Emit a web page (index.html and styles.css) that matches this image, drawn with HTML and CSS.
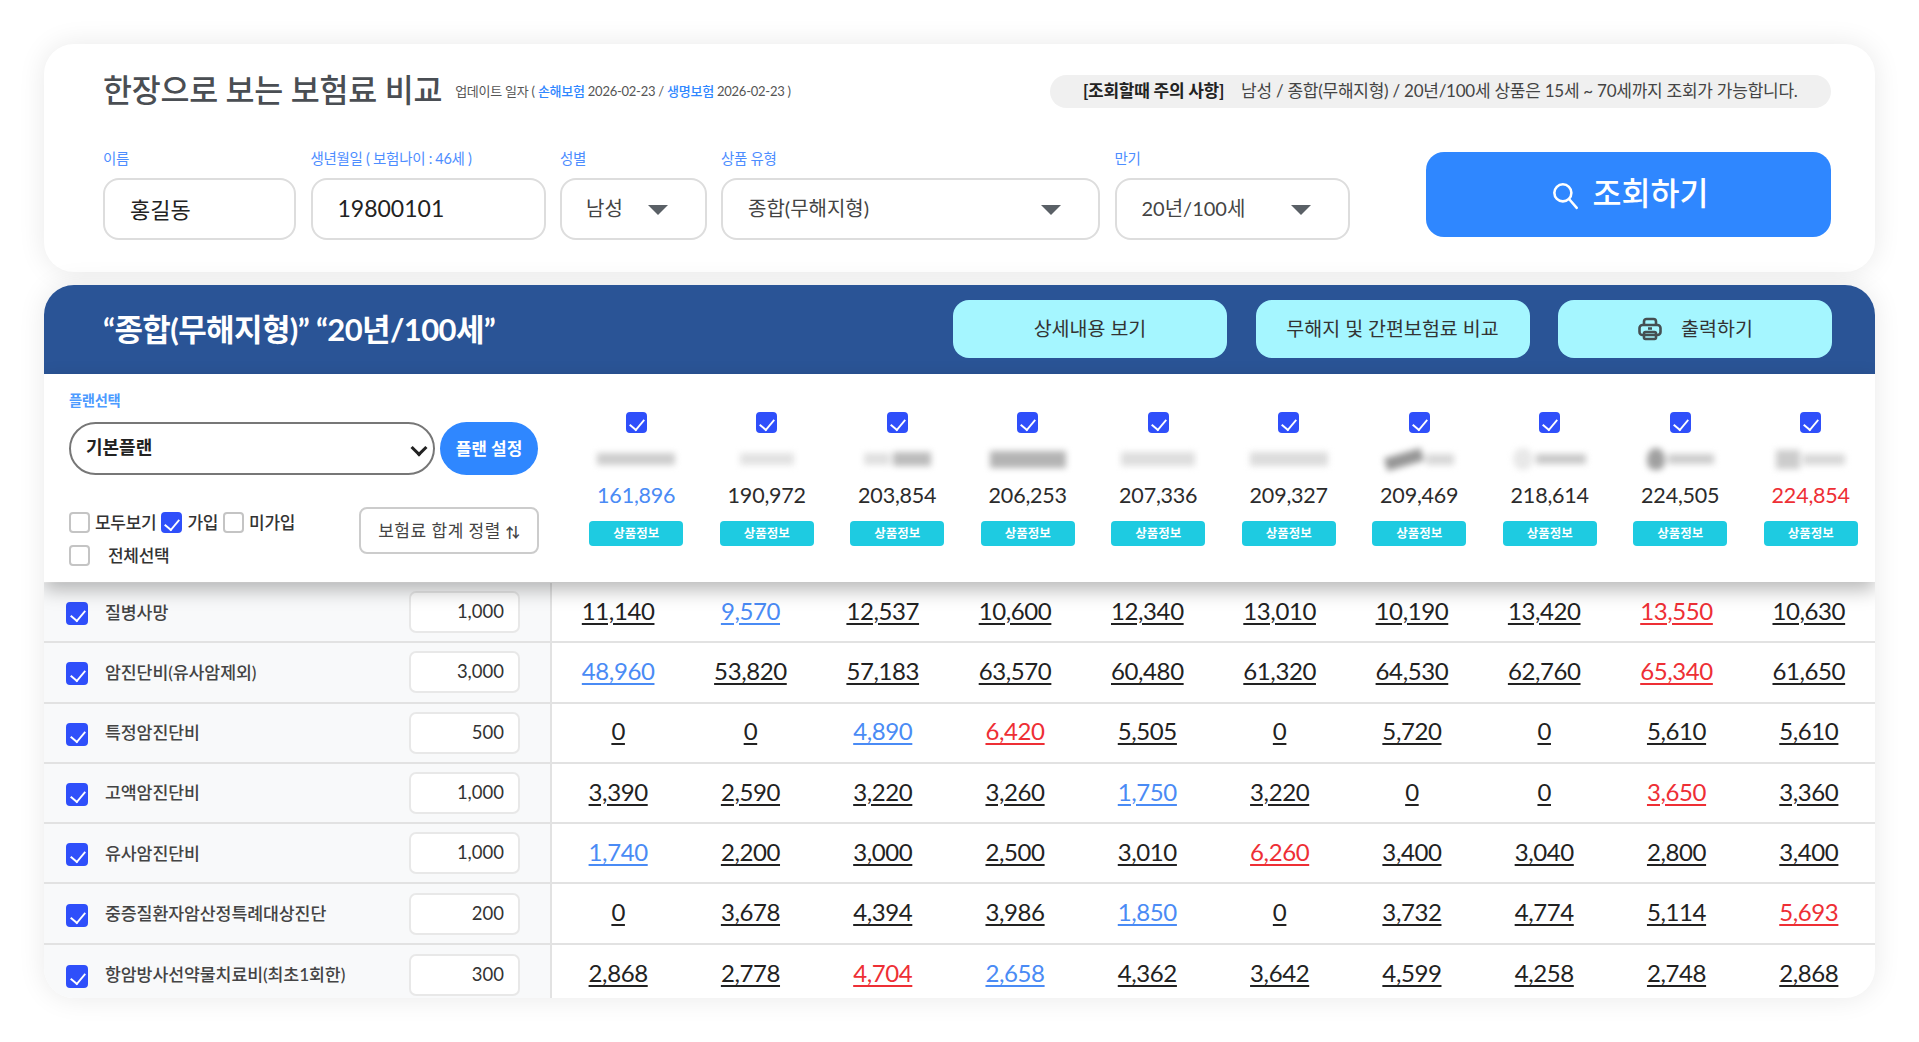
FILE: index.html
```html
<!DOCTYPE html>
<html lang="ko">
<head>
<meta charset="utf-8">
<title>한장으로 보는 보험료 비교</title>
<link rel="stylesheet" href="styles.css">
</head>
<body>

<section class="search-card">
  <div class="search-head">
    <div class="title-wrap">
      <h1>한장으로 보는 보험료 비교</h1>
      <p class="update">업데이트 일자 ( <b>손해보험</b> 2026-02-23 / <b>생명보험</b> 2026-02-23 )</p>
    </div>
    <p class="notice"><b>[조회할때 주의 사항]</b>남성 / 종합(무해지형) / 20년/100세 상품은 15세 ~ 70세까지 조회가 가능합니다.</p>
  </div>
  <form class="search-form">
    <div class="field f-name">
      <label>이름</label>
      <input type="text" value="홍길동">
    </div>
    <div class="field f-birth">
      <label>생년월일 ( 보험나이 : 46세 )</label>
      <input type="text" value="19800101">
    </div>
    <div class="field f-gender">
      <label>성별</label>
      <div class="drop"><select><option>남성</option></select></div>
    </div>
    <div class="field f-type">
      <label>상품 유형</label>
      <div class="drop"><select><option>종합(무해지형)</option></select></div>
    </div>
    <div class="field f-term">
      <label>만기</label>
      <div class="drop"><select><option>20년/100세</option></select></div>
    </div>
    <button class="btn-search" type="button">
      <svg width="32" height="32" viewBox="0 0 30 30" fill="none" stroke="#fff" stroke-width="2.4" stroke-linecap="round"><circle cx="13" cy="13" r="8"/><path d="M19 19l7 8"/></svg>
      조회하기
    </button>
  </form>
</section>

<section class="sheet">
  <div class="band">
    <h2>“종합(무해지형)” “20년/100세”</h2>
    <div class="band-btns">
      <button type="button">상세내용 보기</button>
      <button type="button">무해지 및 간편보험료 비교</button>
      <button type="button">
        <svg width="26" height="24" viewBox="0 0 26 24" fill="none" stroke="#454f52" stroke-width="2.6" stroke-linejoin="round"><path d="M7 8V4.5A2.5 2.5 0 0 1 9.500 2h7A2.500 2.500 0 0 1 19 4.500V8"/><rect x="2.500" y="8" width="21" height="10" rx="3"/><rect x="7" y="15" width="12" height="7" rx="1.500"/><path d="M11 11.500h4"/></svg>
        출력하기
      </button>
    </div>
  </div>

  <div class="plan">
    <div class="plan-side">
      <label class="plan-label">플랜선택</label>
      <div class="plan-row">
        <div class="plan-pick"><select class="plan-select"><option>기본플랜</option></select></div>
        <button class="btn-plan" type="button">플랜 설정</button>
      </div>
      <div class="plan-opts">
        <div class="opts">
          <div class="opt-line">
            <label><input type="checkbox">모두보기</label>
            <label><input type="checkbox" checked>가입</label>
            <label><input type="checkbox">미가입</label>
          </div>
          <div class="opt-line all">
            <label><input type="checkbox">전체선택</label>
          </div>
        </div>
        <button class="btn-sort" type="button">보험료 합계 정렬 <span>⇅</span></button>
      </div>
    </div>

    <div class="co"><input type="checkbox" checked><div class="logo"><i class="t1"></i></div><strong class="up">161,896</strong><button type="button">상품정보</button></div>
    <div class="co"><input type="checkbox" checked><div class="logo"><i class="t2"></i></div><strong>190,972</strong><button type="button">상품정보</button></div>
    <div class="co"><input type="checkbox" checked><div class="logo"><i class="t3a"></i><i class="t3"></i></div><strong>203,854</strong><button type="button">상품정보</button></div>
    <div class="co"><input type="checkbox" checked><div class="logo"><i class="t4"></i></div><strong>206,253</strong><button type="button">상품정보</button></div>
    <div class="co"><input type="checkbox" checked><div class="logo"><i class="t5"></i></div><strong>207,336</strong><button type="button">상품정보</button></div>
    <div class="co"><input type="checkbox" checked><div class="logo"><i class="t6"></i></div><strong>209,327</strong><button type="button">상품정보</button></div>
    <div class="co"><input type="checkbox" checked><div class="logo"><i class="t7a"></i><i class="t7"></i></div><strong>209,469</strong><button type="button">상품정보</button></div>
    <div class="co"><input type="checkbox" checked><div class="logo"><i class="t8a"></i><i class="t8"></i></div><strong>218,614</strong><button type="button">상품정보</button></div>
    <div class="co"><input type="checkbox" checked><div class="logo"><i class="t9a"></i><i class="t9"></i></div><strong>224,505</strong><button type="button">상품정보</button></div>
    <div class="co"><input type="checkbox" checked><div class="logo"><i class="t10a"></i><i class="t10"></i></div><strong class="down">224,854</strong><button type="button">상품정보</button></div>
  </div>

  <div class="rows">
    <div class="row">
      <div class="cover"><input type="checkbox" checked><span>질병사망</span><input class="amt" type="text" value="1,000"></div>
      <a>11,140</a><a class="up">9,570</a><a>12,537</a><a>10,600</a><a>12,340</a><a>13,010</a><a>10,190</a><a>13,420</a><a class="down">13,550</a><a>10,630</a>
    </div>
    <div class="row">
      <div class="cover"><input type="checkbox" checked><span>암진단비(유사암제외)</span><input class="amt" type="text" value="3,000"></div>
      <a class="up">48,960</a><a>53,820</a><a>57,183</a><a>63,570</a><a>60,480</a><a>61,320</a><a>64,530</a><a>62,760</a><a class="down">65,340</a><a>61,650</a>
    </div>
    <div class="row">
      <div class="cover"><input type="checkbox" checked><span>특정암진단비</span><input class="amt" type="text" value="500"></div>
      <a>0</a><a>0</a><a class="up">4,890</a><a class="down">6,420</a><a>5,505</a><a>0</a><a>5,720</a><a>0</a><a>5,610</a><a>5,610</a>
    </div>
    <div class="row">
      <div class="cover"><input type="checkbox" checked><span>고액암진단비</span><input class="amt" type="text" value="1,000"></div>
      <a>3,390</a><a>2,590</a><a>3,220</a><a>3,260</a><a class="up">1,750</a><a>3,220</a><a>0</a><a>0</a><a class="down">3,650</a><a>3,360</a>
    </div>
    <div class="row">
      <div class="cover"><input type="checkbox" checked><span>유사암진단비</span><input class="amt" type="text" value="1,000"></div>
      <a class="up">1,740</a><a>2,200</a><a>3,000</a><a>2,500</a><a>3,010</a><a class="down">6,260</a><a>3,400</a><a>3,040</a><a>2,800</a><a>3,400</a>
    </div>
    <div class="row">
      <div class="cover"><input type="checkbox" checked><span>중증질환자암산정특례대상진단</span><input class="amt" type="text" value="200"></div>
      <a>0</a><a>3,678</a><a>4,394</a><a>3,986</a><a class="up">1,850</a><a>0</a><a>3,732</a><a>4,774</a><a>5,114</a><a class="down">5,693</a>
    </div>
    <div class="row">
      <div class="cover"><input type="checkbox" checked><span>항암방사선약물치료비(최초1회한)</span><input class="amt" type="text" value="300"></div>
      <a>2,868</a><a>2,778</a><a class="down">4,704</a><a class="up">2,658</a><a>4,362</a><a>3,642</a><a>4,599</a><a>4,258</a><a>2,748</a><a>2,868</a>
    </div>
  </div>
</section>

</body>
</html>
```

FILE: styles.css
```css
* { box-sizing: border-box; }
html, body { height: 100%; }
body { margin: 0; padding: 44px 44px 0; overflow: hidden; background: #fff; color: #222; font: 15px/1.4 Lato, "Noto Sans CJK KR", sans-serif; }
h1, h2, p { margin: 0; }
button, input, select { font: inherit; color: inherit; }
button { cursor: pointer; border: 0; }

/* 조회 영역 */
.search-card { height: 228px; padding: 31px 44px 0 59px; background: #fff; border-radius: 30px; box-shadow: 0 0 28px rgba(0, 0, 0, .09); }
.search-head { display: flex; justify-content: space-between; align-items: center; height: 32px; margin-bottom: 45px; }
.title-wrap { display: flex; align-items: center; gap: 13px; }
h1 { margin-top: -2px; font-size: 31.5px; font-weight: 500; line-height: 32px; color: #4a4e53; letter-spacing: -.25px; }
.update { font-size: 13px; color: #555; letter-spacing: -.25px; }
.update b { color: #2f87ff; font-weight: 500; }
.notice { display: flex; align-items: center; gap: 17px; width: 781px; height: 33px; padding-left: 33px; background: #f0f0f0; border-radius: 17px; font-size: 17px; color: #444; letter-spacing: -.25px; }
.notice b { color: #222; font-weight: 700; }

.search-form { display: flex; align-items: flex-start; gap: 14.5px; }
.field { display: flex; flex-direction: column; }
.field label { height: 26px; font-size: 14.5px; line-height: 14px; color: #4d8dff; letter-spacing: -.3px; }
.f-name { width: 193px; }
.f-birth { width: 235px; }
.f-gender { width: 146.5px; }
.f-type { width: 379px; }
.f-term { width: 235px; }
.field input, .drop select { width: 100%; height: 62px; padding: 0 25px 2px; background: #fff; border: 2px solid #ddd; border-radius: 16px; font-size: 22px; color: #222; outline: 0; }
.f-birth input { font-size: 23px; }
.drop { position: relative; }
.drop select { appearance: none; font-size: 20px; color: #444; }
.drop::after { content: ""; position: absolute; right: 39px; top: 27px; border: 10px solid transparent; border-top: 10px solid #5a6066; border-bottom: 0; }
.f-gender .drop select { padding: 0 24px 2px; }
.btn-search { display: flex; align-items: center; justify-content: center; gap: 12px; width: 405px; height: 85px; padding-bottom: 4px; margin-left: auto; background: #2f87ff; color: #fff; border-radius: 18px; font-size: 31.5px; font-weight: 500; }
.btn-search svg { margin-top: 3px; }

/* 결과 표 */
.sheet { height: 713px; margin-top: 13px; overflow: hidden; background: #fff; border-radius: 30px; box-shadow: 0 0 28px rgba(0, 0, 0, .09); }
.band { display: flex; justify-content: space-between; align-items: center; height: 89px; padding: 0 43px 2px 59px; background: #2a5496; }
.band h2 { margin-top: 3px; font-size: 31px; font-weight: 700; color: #fff; letter-spacing: -.6px; }
.band-btns { display: flex; gap: 28.5px; }
.band-btns button { display: flex; align-items: center; justify-content: center; gap: 18px; width: 274px; height: 58px; background: #a5f6ff; border-radius: 16px; font-size: 19.5px; color: #333; }

.plan { position: relative; z-index: 1; display: grid; grid-template-columns: 527px repeat(10, 130.5px); height: 208px; background: #fff; box-shadow: 0 8px 18px rgba(0, 0, 0, .28); }
.plan-side { padding: 17px 33px 0 25px; }
.plan-label { display: block; height: 31px; font-size: 14.3px; font-weight: 700; color: #4d9bff; letter-spacing: -.3px; }
.plan-row { display: flex; gap: 5px; align-items: center; }
.plan-pick { position: relative; }
.plan-pick::after { content: ""; position: absolute; right: 10px; top: 20px; width: 9px; height: 9px; transform: rotate(45deg); border: solid #222; border-width: 0 3px 3px 0; }
.plan-select { display: block; appearance: none; width: 366px; height: 53px; padding: 0 30px 2px 15px; background: #fff; border: 2px solid #777; border-radius: 27px; font-size: 18px; font-weight: 700; color: #222; outline: 0; }
.btn-plan { width: 98px; height: 53px; background: #2f87ff; color: #fff; border-radius: 27px; font-size: 17px; font-weight: 700; }
.plan-opts { display: flex; justify-content: space-between; align-items: flex-start; margin-top: 32px; }
.opts { padding-top: 5px; }
.opt-line { display: flex; gap: 5px; height: 21px; }
.opt-line label { display: flex; align-items: center; gap: 5px; font-size: 17px; font-weight: 500; color: #333; letter-spacing: -.3px; }
.opt-line.all { margin-top: 12px; }
.opt-line.all label { gap: 18px; }
.btn-sort { width: 180px; height: 47px; margin-right: -1px; background: #fff; border: 2px solid #ccc; border-radius: 8px; font-size: 17px; color: #444; letter-spacing: .5px; }
.btn-sort span { font-weight: 700; font-size: 14px; letter-spacing: 0; }

input[type=checkbox] { appearance: none; position: relative; flex: none; width: 21px; height: 21px; margin: 0; background: #fff; border: 2px solid #c4c4c4; border-radius: 4px; }
input[type=checkbox]:checked { background: #2f4ffa; border-color: #2f4ffa; }
input[type=checkbox]:checked::after { content: ""; position: absolute; left: 4px; top: 2px; width: 8px; height: 12px; transform: rotate(40deg) scaleX(.9); border: solid #fff; border-width: 0 2px 2px 0; }

.co { display: flex; flex-direction: column; align-items: center; padding-top: 38px; }
.co strong { height: 30px; margin-top: 10px; font-size: 21.5px; font-weight: 400; line-height: 30px; color: #2b2b2b; letter-spacing: -.2px; }
.co strong.up { color: #4a8bf5; }
.co strong.down { color: #ee2f35; }
.co button { width: 94px; height: 25px; margin-top: 11px; background: #1ecbe1; color: #fff; border-radius: 4px; font-size: 12.5px; font-weight: 700; line-height: 25px; padding: 0; }

/* 보험사 로고(흐림 처리) */
.logo { display: flex; align-items: center; justify-content: center; gap: 3px; width: 100px; height: 22px; margin-top: 15px; filter: blur(3px); }
.logo i { display: block; height: 12px; background: #cfcfcf; }
.logo .t1 { width: 78px; background: #cdcdcd; }
.logo .t2 { width: 54px; background: #e2e2e2; }
.logo .t3a { width: 26px; background: #e0e0e0; }
.logo .t3 { width: 38px; height: 14px; background: #bcbcbc; }
.logo .t4 { width: 76px; height: 17px; background: #b4b4b4; }
.logo .t5 { width: 74px; height: 14px; background: #dedede; }
.logo .t6 { width: 78px; height: 14px; background: #dcdcdc; }
.logo .t7a { width: 38px; height: 13px; background: #969696; transform: rotate(-16deg); }
.logo .t7 { width: 28px; height: 11px; background: #d8d8d8; }
.logo .t8a { width: 20px; height: 22px; background: #e8e8e8; border-radius: 50%; }
.logo .t8 { width: 50px; height: 10px; background: #c8c8c8; }
.logo .t9a { width: 18px; height: 22px; background: #a0a0a0; border-radius: 50% 50% 40% 40%; }
.logo .t9 { width: 46px; height: 10px; background: #cccccc; }
.logo .t10a { width: 24px; height: 19px; background: #cccccc; }
.logo .t10 { width: 42px; height: 11px; background: #d8d8d8; }

.rows { padding-top: 1px; }
.row { display: grid; grid-template-columns: 508px repeat(10, 132.3px); height: 60.3px; border-bottom: 2px solid #e2e2e2; }
.row:last-child { border-bottom: 0; }
.cover { display: flex; align-items: center; height: 100%; padding: 0 30px 0 22px; background: #f8f9fa; border-right: 2px solid #e2e2e2; }
.cover input[type=checkbox] { width: 22px; height: 23px; margin-top: 3px; }
.cover input[type=checkbox]:checked::after { left: 5px; top: 3px; }
.cover span { margin-left: 17px; margin-top: 1px; font-size: 17.3px; font-weight: 500; color: #444; letter-spacing: -.1px; }
.amt { width: 111px; height: 42px; margin-left: auto; padding: 0 14px 2px 0; background: #fff; border: 2px solid #e8e8e8; border-radius: 7px; text-align: right; font-size: 18.5px; color: #333; outline: 0; }
.row a { align-self: center; justify-self: center; margin-bottom: 3px; font-size: 24px; line-height: 30px; color: #222; text-decoration: underline; text-underline-offset: 3px; letter-spacing: -.4px; }
.row a.up { color: #4a8bf5; }
.row a.down { color: #ee2f35; }
```
